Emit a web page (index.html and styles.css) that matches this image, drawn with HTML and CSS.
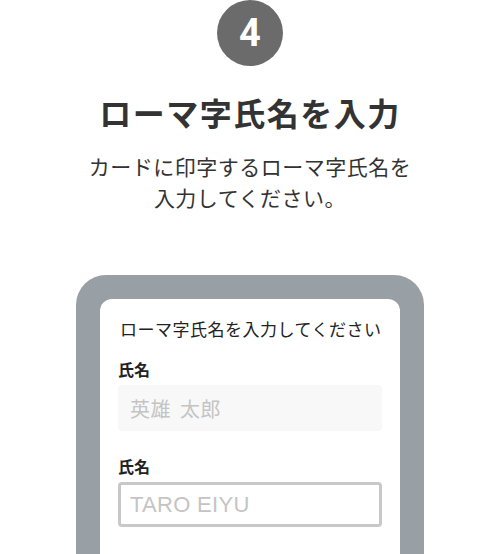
FILE: index.html
```html
<!DOCTYPE html>
<html lang="ja">
<head>
    <meta charset="UTF-8">
    <meta name="viewport" content="width=device-width, initial-scale=1.0">
    <title>ローマ字氏名を入力</title>
    <link rel="stylesheet" href="styles.css">
</head>
<body>
    <div class="step">4</div>
    <h1 class="title">ローマ字氏名を入力</h1>
    <p class="lead">カードに印字するローマ字氏名を<br>入力してください。</p>

    <div class="phone">
        <div class="screen">
            <p class="screen-heading">ローマ字氏名を入力してください</p>
            <label class="field-label">氏名</label>
            <input class="field field-filled" type="text" placeholder="英雄 太郎" readonly>
            <label class="field-label field-label-second">氏名</label>
            <input class="field field-active" type="text" placeholder="TARO EIYU">
        </div>
    </div>
</body>
</html>
```

FILE: styles.css
```css
body {
    margin: 0;
    height: 554px;
    overflow: hidden;
    font-family: "Noto Sans CJK JP", "Noto Sans", sans-serif;
    color: #333;
    background: #fff;
    display: flex;
    flex-direction: column;
    align-items: center;
}
.step {
    width: 66px;
    height: 66px;
    border-radius: 50%;
    background-color: #6b6b6b;
    color: #fff;
    font-family: "Roboto", "Liberation Sans", sans-serif;
    font-weight: 700;
    font-size: 38px;
    line-height: 66px;
    text-align: center;
    flex-shrink: 0;
}
.title {
    margin: 24px 0 0;
    font-size: 32px;
    line-height: 45px;
    font-weight: 700;
    letter-spacing: 1.5px;
    color: #333;
}
.lead {
    margin: 16px 0 0;
    font-size: 21px;
    line-height: 31px;
    letter-spacing: 0.5px;
    text-align: center;
    color: #333;
}
.phone {
    margin-top: 62px;
    width: 300px;
    flex: 1;
    padding: 24px 24px 0;
    background-color: #989fa5;
    border-radius: 30px 30px 0 0;
    display: flex;
}
.screen {
    flex: 1;
    background: #fff;
    border-radius: 12px 12px 0 0;
    padding: 18px 18px 0;
    display: flex;
    flex-direction: column;
}
.screen-heading {
    margin: 0 0 0 2px;
    font-size: 17px;
    line-height: 24px;
    letter-spacing: 0.5px;
    color: #222;
}
.field-label {
    margin-top: 16px;
    font-size: 16px;
    line-height: 24px;
    font-weight: 700;
    color: #222;
}
.field-label-second {
    margin-top: 23px;
}
.field {
    box-sizing: border-box;
    margin-top: 4px;
    width: 100%;
    height: 46px;
    padding: 0 12px;
    border-radius: 4px;
    outline: none;
    font-size: 20px;
    color: #333;
}
.field::placeholder {
    color: #c4c4c4;
}
.field-filled {
    border: none;
    background-color: #f8f8f8;
    font-family: "Noto Sans CJK JP", sans-serif;
    word-spacing: 4px;
    letter-spacing: 0.5px;
}
.field-active {
    height: 45px;
    border: 3px solid #c8c8c8;
    background: #fff;
    padding: 0 9px;
    font-family: "Liberation Sans", Arial, sans-serif;
    font-size: 22px;
    letter-spacing: 0.3px;
}
```
